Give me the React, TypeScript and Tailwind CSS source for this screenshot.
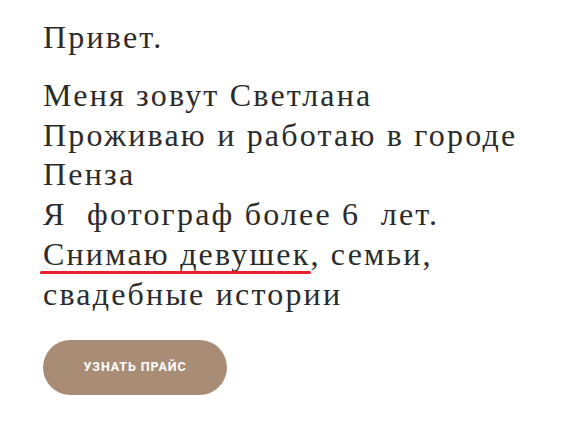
export default function App() {
  return (
    <div className="min-h-[441px] w-[563px] bg-white pl-[43px] pt-[18px]">
      <div
        className="text-[32px] leading-[39.75px] tracking-[2.2px] text-[#2b2b2b]"
        style={{ fontFamily: '"Liberation Serif", serif' }}
      >
        <p>Привет.</p>
        <p className="mt-[18px] whitespace-pre-wrap">
          Меня зовут Светлана
          <br />
          Проживаю и работаю в городе
          <br />
          Пенза
          <br />
          {"Я  фотограф более 6  лет."}
          <br />
          <span className="relative inline-block">
            Снимаю девушек
            <span className="absolute left-[-3px] right-[-1px] top-[36px] h-[3px] rounded-full bg-[#e8222c]" />
          </span>
          , семьи,
          <br />
          свадебные истории
        </p>
      </div>
      <button
        className="mt-[26px] flex h-[55px] w-[184px] items-center justify-center rounded-full bg-[#a98c76] text-[12.5px] font-bold tracking-[0.9px] text-white"
        style={{ fontFamily: 'Roboto, sans-serif' }}
      >
        УЗНАТЬ ПРАЙС
      </button>
    </div>
  );
}
